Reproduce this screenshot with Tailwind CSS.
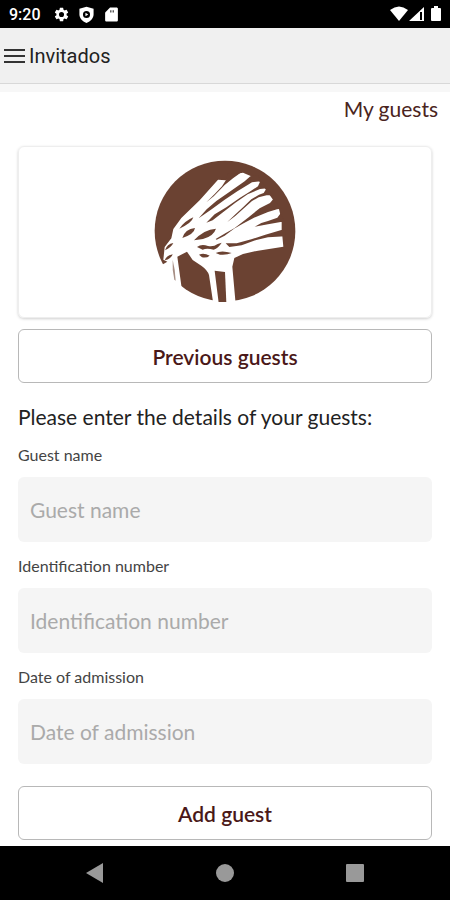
<!DOCTYPE html>
<html lang="en">
<head>
<meta charset="utf-8">
<meta name="viewport" content="width=device-width, initial-scale=1">
<title>Invitados</title>
<script src="https://cdn.jsdelivr.net/npm/@tailwindcss/browser@4"></script>
</head>
<body class="flex min-h-screen flex-col bg-white font-[Lato,sans-serif] text-[#222]">
<div class="flex h-7 items-center bg-black px-[9px] font-[Roboto,sans-serif] text-white">
  <span class="pt-0.5 text-base font-medium">9:20</span>
  <div class="ml-3 flex items-center gap-2">
    <svg class="size-[17px]" viewBox="0 0 24 24" fill="currentColor"><path d="M19.14 12.94c.04-.3.06-.61.06-.94s-.02-.64-.07-.94l2.03-1.58a.5.5 0 0 0 .12-.61l-1.92-3.32a.5.5 0 0 0-.59-.22l-2.39.96a7 7 0 0 0-1.62-.94l-.36-2.54a.5.5 0 0 0-.48-.41h-3.84a.5.5 0 0 0-.47.41l-.36 2.54a7 7 0 0 0-1.62.94l-2.39-.96a.5.5 0 0 0-.59.22L2.74 8.87a.5.5 0 0 0 .12.61l2.03 1.58a7 7 0 0 0 0 1.88l-2.03 1.58a.5.5 0 0 0-.12.61l1.92 3.32c.12.22.37.29.59.22l2.39-.96c.5.38 1.03.7 1.62.94l.36 2.54c.05.24.24.41.48.41h3.84c.24 0 .44-.17.47-.41l.36-2.54a7 7 0 0 0 1.62-.94l2.39.96c.22.08.47 0 .59-.22l1.92-3.32a.5.5 0 0 0-.12-.61zM12 15.6a3.6 3.6 0 1 1 0-7.2 3.6 3.6 0 0 1 0 7.2z"/></svg>
    <svg class="size-[17px]" viewBox="0 0 24 24" fill="currentColor"><path fill-rule="evenodd" d="M12 1 2 4v8c0 5 4 9.500 10 12 6-2.500 10-7 10-12V4zM12 7a5 5 0 1 1 0 10 5 5 0 0 1 0-10zM10.500 9.500v5l4-2.500z"/></svg>
    <svg class="size-[17px]" viewBox="0 0 24 24" fill="currentColor"><path d="M19 2h-9L3 9v11c0 1.100.9 2 2 2h14c1.100 0 2-.9 2-2V4c0-1.100-.9-2-2-2z"/><path d="M10 6h2v3h-2zM13.500 6h2v3h-2z" fill="#555"/></svg>
  </div>
  <div class="ml-auto flex items-center gap-px">
    <svg class="h-4 w-[18px]" viewBox="0 0 18 16" fill="currentColor"><path d="M0 4Q9-3 18 4L9 15z"/></svg>
    <svg class="h-4 w-[15px]" viewBox="0 0 15 16" fill="currentColor"><path fill-rule="evenodd" d="M0 15 15 1v14zM11 6h2v8h-2z"/></svg>
    <svg class="ml-1.5 h-4 w-[10px]" viewBox="0 0 10 16" fill="currentColor"><path d="M3 0h4v2h2q1 0 1 1v11q0 1-1 1H1q-1 0-1-1V3q0-1 1-1h2z"/></svg>
  </div>
</div>
<header class="flex h-14 items-center border-b border-[#d8d8d8] bg-[#f0f0f0] pl-1 font-[Roboto,sans-serif] shadow-[0_8px_0_#f7f7f7]">
  <button type="button" aria-label="Menu" class="flex w-[21px] flex-col gap-1 *:h-0.5 *:bg-[#333]"><span></span><span></span><span></span></button>
  <h1 class="ml-1 text-xl font-normal">Invitados</h1>
</header>
<main class="flex grow flex-col px-[18px]">
  <a href="#" class="-mr-1.5 mt-[11px] self-end text-[21px] leading-7 text-[#4a2420]">My guests</a>
  <div class="mt-[23px] flex h-[172px] items-center justify-center rounded-md border border-[#eee] shadow-[0_1px_3px_#00000030]">
    <svg class="mb-0.5 size-[142px]" viewBox="28 30 426 426" role="img" aria-label="Logo">
      <circle cx="241" cy="243" r="211" fill="#6b4232"/>
      <path fill="#fff" d="M60 291 80 265 86 237 110 204 165 151 220 89 243 91 285 70 295 68 318 78 345 95 362 117 384 148 403 178 406 190 411 217 411 238 413 258 416 290 340 302 295 312 269 324 263 350 273 462 206 462 193 375Q188 360 171 348L144 330 127 305 98 320 111 414Q73 394 51 345L68 335 56 329z"/>
      <g fill="#6b4232">
        <path d="M185 157 210 132 232 109 244 90 250 70 287 69 265 85 240 105 208 138z"/>
        <path d="M162 205 186 178 215 153 255 125 300 94 317 79 340 75 348 94 322 97 310 104 278 124 240 149 202 177z"/>
        <path d="M185 218 210 193 245 172 285 144 315 125 340 109 347 93 368 115 346 117 309 133 272 158 233 188 204 211z"/>
        <path d="M248 216 270 195 296 171 320 148 343 134 357 129 366 115 386 136 366 136 342 142 322 153 296 176 271 199z"/>
        <path d="M213 267 242 250 270 234 310 203 345 175 376 159 386 147 410 176 397 178 370 186 328 203 294 221 268 236 240 257 216 269z"/>
        <path d="M330 230 350 219 370 213 398 203 408 190 420 216 408 216 370 223z"/>
        <path d="M243 280 276 280 320 268 362 254 410 240 422 238 422 259 370 262 335 270 291 286 254 291z"/>
        <path d="M104 236Q120 213 146 202Q142 219 104 236zM113 264Q121 237 151 234Q149 252 113 264zM148 271Q178 238 214 236Q207 258 175 267z"/>
        <path d="M157 291Q170 281 190 288Q207 291 219 282L231 278Q221 294 207 299Q186 293 174 299zM163 314Q178 308 195 317Q186 325 172 322zM213 309Q230 300 261 309Q246 316 226 314zM61 301Q67 281 86 279Q80 292 61 301zM60 331Q66 316 84 313Q80 327 60 331z"/>
        <path d="M210 362 241 366 245 458 222 458z"/>
        <path d="M84 329Q92 360 93 392L89 389Q82 358 84 329z" opacity=".6"/>
      </g>
    </svg>
  </div>
  <button type="button" class="mt-[11px] h-[54px] rounded-md border border-[#b8b8b8] pt-0.5 text-[21px] font-semibold text-[#4a1818]">Previous guests</button>
  <form class="flex flex-col">
    <p class="mt-5 text-[21px] leading-7">Please enter the details of your guests:</p>
    <label for="name" class="mt-3 text-base leading-6 text-[#444]">Guest name</label>
    <input id="name" placeholder="Guest name" class="mt-2.5 h-[65px] rounded-md bg-[#f5f5f5] px-3 text-[21px] placeholder:text-[#aaa]">
    <label for="idn" class="mt-3 text-base leading-6 text-[#444]">Identification number</label>
    <input id="idn" placeholder="Identification number" class="mt-2.5 h-[65px] rounded-md bg-[#f5f5f5] px-3 text-[21px] placeholder:text-[#aaa]">
    <label for="date" class="mt-3 text-base leading-6 text-[#444]">Date of admission</label>
    <input id="date" placeholder="Date of admission" class="mt-2.5 h-[65px] rounded-md bg-[#f5f5f5] px-3 text-[21px] placeholder:text-[#aaa]">
    <button type="button" class="mt-[22px] h-[54px] rounded-md border border-[#b8b8b8] pt-0.5 text-[21px] font-semibold text-[#4a1818]">Add guest</button>
  </form>
</main>
<nav class="mt-1 flex h-[54px] items-center justify-around bg-black px-[30px] text-[#999]">
  <button type="button" aria-label="Back"><svg class="size-5" viewBox="0 0 20 20" fill="currentColor"><path d="M1 10 18 0v20z"/></svg></button>
  <button type="button" aria-label="Home"><svg class="size-5" viewBox="0 0 20 20" fill="currentColor"><circle cx="10" cy="10" r="9"/></svg></button>
  <button type="button" aria-label="Recents"><svg class="size-5" viewBox="0 0 20 20" fill="currentColor"><rect x="1" y="1" width="18" height="18" rx="1"/></svg></button>
</nav>
</body>
</html>
